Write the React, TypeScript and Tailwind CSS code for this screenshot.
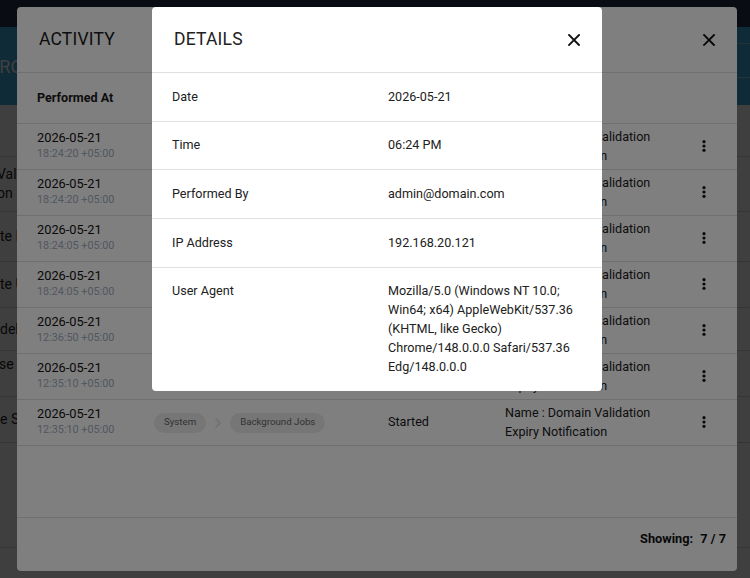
import { ReactNode } from "react";

const font = { fontFamily: "Roboto, 'Noto Sans', sans-serif" };

const activity = [
  "18:24:20 +05:00",
  "18:24:20 +05:00",
  "18:24:05 +05:00",
  "18:24:05 +05:00",
  "12:36:50 +05:00",
  "12:35:10 +05:00",
  "12:35:10 +05:00",
];

// rows of the page that sits behind both dialogs
const pageRows = [
  { h: "h-[55px]", lines: ["Validation", "on"], shift: "-ml-[3px]" },
  { h: "h-[50px]", lines: ["te Item"], shift: "ml-0" },
  { h: "h-[46px]", lines: ["te User"], shift: "ml-0" },
  { h: "h-[43px]", lines: ["delete"], shift: "ml-0" },
  { h: "h-[46px]", lines: ["se cache", ""], shift: "-ml-[1px]" },
  { h: "h-[46px]", lines: ["e Service"], shift: "ml-0" },
];

const details: { label: string; value: ReactNode }[] = [
  { label: "Date", value: "2026-05-21" },
  { label: "Time", value: "06:24 PM" },
  { label: "Performed By", value: "admin@domain.com" },
  { label: "IP Address", value: "192.168.20.121" },
  {
    label: "User Agent",
    value:
      "Mozilla/5.0 (Windows NT 10.0; Win64; x64) AppleWebKit/537.36 (KHTML, like Gecko) Chrome/148.0.0.0 Safari/537.36 Edg/148.0.0.0",
  },
];

function CloseIcon() {
  return (
    <svg width="12" height="12" viewBox="0 0 12 12" className="block">
      <path d="M1 1L11 11M11 1L1 11" stroke="#111" strokeWidth="1.9" strokeLinecap="square" />
    </svg>
  );
}

function Kebab() {
  return (
    <svg width="4" height="12" viewBox="0 0 4 12" className="block">
      <circle cx="2" cy="1.7" r="1.6" fill="#111" />
      <circle cx="2" cy="6" r="1.6" fill="#111" />
      <circle cx="2" cy="10.3" r="1.6" fill="#111" />
    </svg>
  );
}

function Pill({ children }: { children: ReactNode }) {
  return (
    <span className="inline-flex h-[20px] items-center rounded-full bg-[#ececec] px-[10px] text-[9.7px] text-[#666]">
      {children}
    </span>
  );
}

function BackgroundPage() {
  return (
    <div className="flex h-[578px] w-[750px] flex-col overflow-hidden bg-white">
      <div className="h-[27px] bg-[#27364f]" />
      <div className="flex h-[78px] items-center justify-between bg-[#3aaedc]">
        <span className="-ml-[12px] text-[18px] text-white">PROCESSES</span>
        <div className="mb-[12px] h-[35px] w-[14px] border-y border-white/40" />
      </div>
      <div className="h-[52px] border-b border-[#d4d4d4]" />
      {pageRows.map((r, i) => (
        <div key={i} className={`${r.h} flex flex-col justify-center border-b border-[#d4d4d4] text-[14px] leading-[19px] text-[#222]`}>
          {r.lines.map((l, j) => (
            <span key={j} className={`${r.shift} whitespace-nowrap`}>
              {l || "\u00a0"}
            </span>
          ))}
        </div>
      ))}
      <div className="h-[105px] border-b border-[#d4d4d4]" />
    </div>
  );
}

function ActivityDialog() {
  return (
    <div className="flex h-[564px] w-[720px] flex-col overflow-hidden rounded-[4px] bg-white text-[#1a1a1a]">
      <div className="flex h-[66px] shrink-0 items-center justify-between border-b border-[#dedede] px-[22px]">
        <h2 className="text-[17.5px] leading-none tracking-[0.2px]">ACTIVITY</h2>
        <CloseIcon />
      </div>
      <div className="grid h-[51px] shrink-0 grid-cols-[117px_234px_117px_1fr_26px] items-center border-b border-[#dedede] px-[20px] text-[12.6px] font-bold">
        <span>Performed At</span>
        <span>Module</span>
        <span>Status</span>
        <span>Details</span>
        <span />
      </div>
      <div className="flex-1">
        {activity.map((t, i) => (
          <div
            key={i}
            className="grid h-[46px] grid-cols-[117px_234px_117px_1fr_26px] items-center border-b border-[#dedede] px-[20px] text-[12.6px]"
          >
            <div className="flex flex-col pb-[2px]">
              <span className="text-[12.8px] leading-[17px] text-[#111]">2026-05-21</span>
              <span className="text-[10.8px] leading-[16px] text-[#a3aec0]">{t}</span>
            </div>
            <div className="flex items-center gap-[8px]">
              <Pill>System</Pill>
              <svg width="8" height="12" viewBox="0 0 8 12">
                <path d="M1.5 1.5L6 6L1.5 10.5" fill="none" stroke="#e2e2e2" strokeWidth="1.6" />
              </svg>
              <Pill>Background Jobs</Pill>
            </div>
            <span>Started</span>
            <div className="flex flex-col pb-[2px] leading-[19px]">
              <span>Name : Domain Validation</span>
              <span>Expiry Notification</span>
            </div>
            <div className="flex justify-center pb-[2px]">
              <Kebab />
            </div>
          </div>
        ))}
      </div>
      <div className="flex h-[54px] shrink-0 items-start justify-end gap-[7px] border-t border-[#dedede] pr-[11px] pt-[12px] text-[12.8px] font-bold leading-[17px] text-[#111]">
        <span>Showing:</span>
        <span>7 / 7</span>
      </div>
    </div>
  );
}

function DetailsDialog() {
  return (
    <div className="w-[450px] overflow-hidden rounded-[4px] bg-white text-[12.6px] text-[#212121]">
      <div className="flex h-[66px] items-center justify-between border-b border-[#e0e0e0] px-[22px]">
        <h2 className="text-[17.5px] leading-none tracking-[0.2px]">DETAILS</h2>
        <CloseIcon />
      </div>
      {details.map((d, i) => (
        <div
          key={d.label}
          className={`grid grid-cols-[216px_1fr] px-[20px] pt-[13.7px] leading-[19px] ${
            i === details.length - 1 ? "pb-[15px]" : "border-b border-[#e0e0e0] pb-[15px]"
          }`}
        >
          <span>{d.label}</span>
          <span className="break-words">{d.value}</span>
        </div>
      ))}
    </div>
  );
}

export default function App() {
  return (
    <div className="relative h-[578px] w-[750px] overflow-hidden" style={font}>
      <BackgroundPage />
      <div className="absolute inset-0 bg-black/50" />
      <div className="absolute inset-0 flex justify-center pl-[4px] pt-[7px]">
        <ActivityDialog />
      </div>
      <div className="absolute inset-0 bg-black/50" />
      <div className="absolute inset-0 flex items-start justify-center pl-[4px] pt-[7px]">
        <DetailsDialog />
      </div>
    </div>
  );
}
